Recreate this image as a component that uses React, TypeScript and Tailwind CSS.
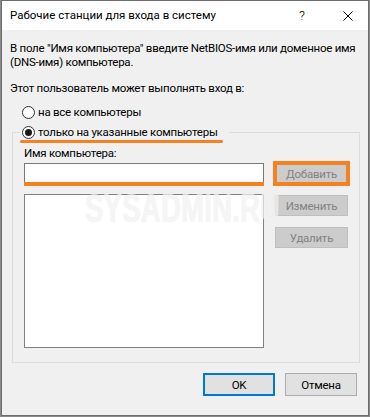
import React from 'react';

const Radio = ({ checked }: { checked?: boolean }) => (
  <span className="w-[13px] h-[13px] rounded-full border border-[#333333] bg-white flex items-center justify-center shrink-0">
    {checked && <span className="w-[7px] h-[7px] rounded-full bg-[#1a1a1a]" />}
  </span>
);

const DisabledButton = ({ label }: { label: string }) => (
  <button
    disabled
    className="w-[73px] h-[21px] bg-[#cccccc] border border-[#bfbfbf] text-[#838383] flex items-center justify-center"
  >
    {label}
  </button>
);

export default function App() {
  return (
    <div className="w-[370px] h-[417px] bg-[#8a8a8a] px-[1px] font-['Roboto',sans-serif] text-[11.5px] text-black overflow-hidden">
      <div className="h-[416px] border border-[#6d6d6d] bg-[#f0f0f0] flex flex-col">
        {/* Title bar */}
        <div className="h-[29px] bg-white flex items-center pl-[8px] pr-[15px] shrink-0">
          <span className="flex-1">Рабочие станции для входа в систему</span>
          <span className="text-[13px] font-light">?</span>
          <svg className="ml-[38px]" width="10" height="10" viewBox="0 0 10 10">
            <path d="M0.5 0.5 L9.5 9.5 M9.5 0.5 L0.5 9.5" stroke="#000" strokeWidth="1" fill="none" />
          </svg>
        </div>

        {/* Body */}
        <div className="flex-1 flex flex-col pl-[8px] pr-[8px] pt-[11px] leading-[14px] tracking-[-0.25px]">
          <p className="whitespace-nowrap">В поле "Имя компьютера" введите NetBIOS-имя или доменное имя</p>
          <p>(DNS-имя) компьютера.</p>
          <p className="mt-[12px]">Этот пользователь может выполнять вход в:</p>

          <label className="flex items-center gap-[3px] mt-[10px] pl-[12px]">
            <Radio />
            на все компьютеры
          </label>

          <fieldset className="relative mt-[6px] ml-[2px] border border-[#dcdcdc] pl-[11px] pr-[11px] pt-[7px] pb-[14px]">
            <legend className="relative ml-[-4px] pl-[2px] pr-[11px]">
              <span className="flex items-center gap-[3px]">
                <Radio checked />
                только на указанные компьютеры
              </span>
              <span className="absolute left-0 right-[6px] bottom-[-4px] h-[3px] rounded-full bg-[#f58220]" />
            </legend>

            <div className="flex gap-[11px]">
              <div className="w-[240px] flex flex-col">
                <span>Имя компьютера:</span>
                <div className="relative mt-[3px] h-[20px] bg-white border border-[#7a7a7a]">
                  <span className="absolute left-[-1px] right-[-1px] bottom-[-4px] h-[4px] bg-[#f58220]" />
                </div>
                <div className="mt-[11px] h-[154px] bg-white border border-[#828282]" />
              </div>

              <div className="w-[73px] flex flex-col pt-[15px]">
                <div className="ml-[-2px] w-[77px] h-[25px] border-[4px] border-[#f58220]">
                  <button disabled className="w-full h-full bg-[#cccccc] text-[#838383] flex items-center justify-center">
                    Добавить
                  </button>
                </div>
                <div className="mt-[9px]">
                  <DisabledButton label="Изменить" />
                </div>
                <div className="mt-[11px]">
                  <DisabledButton label="Удалить" />
                </div>
              </div>
            </div>

            {/* watermark */}
            <span className="absolute left-[72px] top-[49px] origin-left [transform:scaleX(0.68)] font-['Liberation_Sans',sans-serif] font-bold text-[41px] leading-none tracking-normal whitespace-nowrap text-white/70 [text-shadow:0_0_1px_rgba(0,0,0,0.12)] pointer-events-none">
              SYSADMIN.RU
            </span>
          </fieldset>

          <div className="flex justify-end gap-[10px] mt-[10px] mr-[3px]">
            <button className="w-[72px] h-[23px] bg-[#e1e1e1] border-2 border-[#0078d7] flex items-center justify-center">
              OK
            </button>
            <button className="w-[72px] h-[23px] bg-[#e1e1e1] border border-[#adadad] flex items-center justify-center">
              Отмена
            </button>
          </div>
        </div>
      </div>
    </div>
  );
}
